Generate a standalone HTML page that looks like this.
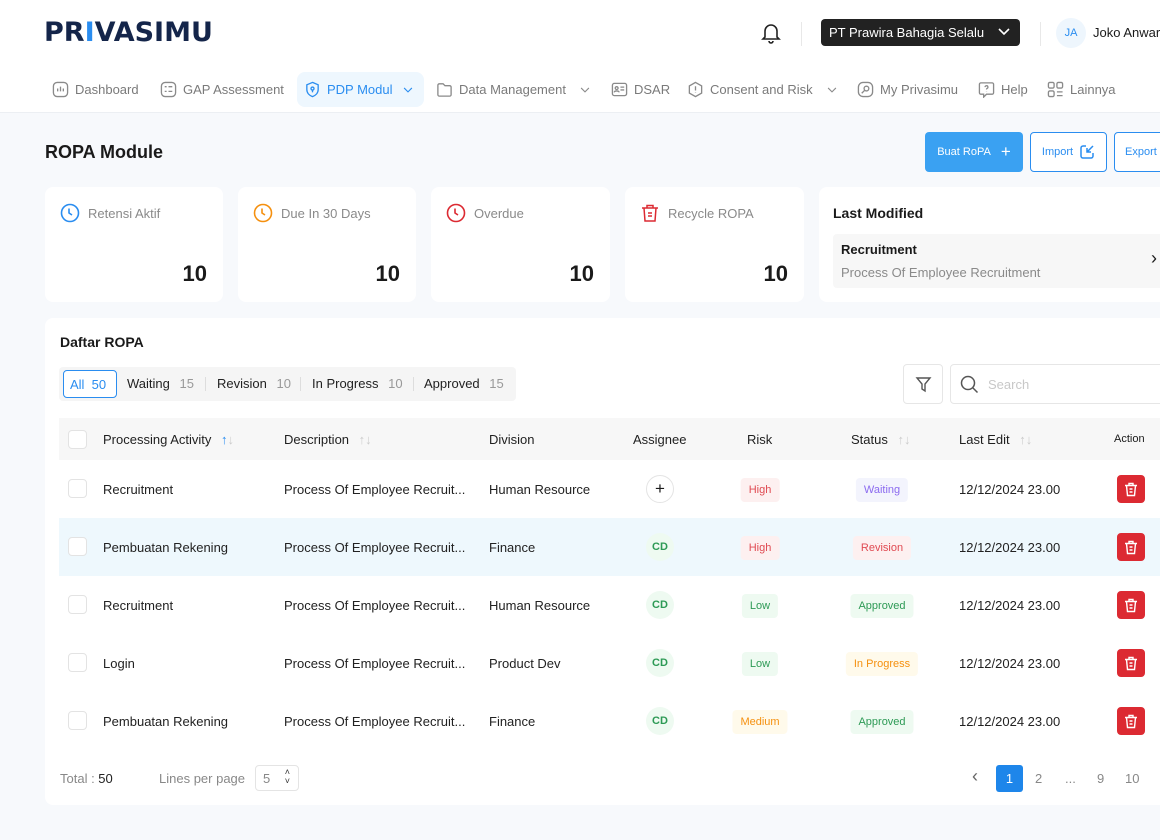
<!DOCTYPE html>
<html><head><meta charset="utf-8"><style>
*{box-sizing:border-box;margin:0;padding:0}
body{width:1160px;height:840px;overflow:hidden;background:#f7f9fc;font-family:"Liberation Sans",sans-serif;color:#1a1a1a;position:relative}
.a{position:absolute}
.hdr{left:0;top:0;width:1160px;height:113px;background:#fff;border-bottom:1px solid #eceff3}
.ni{position:absolute;top:72px;display:flex;align-items:center;gap:6px;height:35px;font-size:13px;color:#7a7a7a;white-space:nowrap}
.ni svg{width:17px;height:17px;stroke:#8a8a8a;fill:none;stroke-width:1.4}
.card{background:#fff;border-radius:8px}
.st{font-size:13px;color:#8a8a8a;display:flex;align-items:center;gap:8px}
.num{font-size:22px;font-weight:bold;right:16px;top:74px}
.th{font-size:13px;color:#1f1f1f}
.row{left:59px;width:1101px;height:58px}
.cb{width:19px;height:19px;border:1px solid #e3e3e3;border-radius:4px;background:#fff}
.t{font-size:13px;color:#222;white-space:nowrap}
.tag{font-size:11px;padding:6px 8px;border-radius:4px;transform:translateX(-50%);white-space:nowrap}
.cd{width:28px;height:28px;border-radius:50%;background:#eefaf1;color:#2d9a55;font-size:11px;font-weight:bold;display:flex;align-items:center;justify-content:center}
.del{width:28px;height:28px;border-radius:4px;background:#dc2a32;display:flex;align-items:center;justify-content:center}
</style></head><body>
<div class="a hdr"></div>
<div class="a" style="left:44px;top:17px;font-size:27px;font-weight:900;color:#14254a;letter-spacing:0px;font-family:'DejaVu Sans',sans-serif;white-space:nowrap">PR<span style="color:#2a8df0">I</span>VASIMU</div>
<svg class="a" style="left:761px;top:22px" width="20" height="22" viewBox="0 0 20 22" fill="none" stroke="#222" stroke-width="1.6"><path d="M4 15V9a6 6 0 0 1 12 0v6l2 2H2z"/><path d="M8 19a2 2 0 0 0 4 0"/></svg>
<div class="a" style="left:801px;top:22px;width:1px;height:24px;background:#e8e8e8"></div>
<div class="a" style="left:821px;top:19px;width:199px;height:27px;background:#222;border-radius:4px;color:#fff;font-size:13px;padding:6px 8px;white-space:nowrap">PT Prawira Bahagia Selalu<svg style="position:absolute;right:10px;top:9px" width="12" height="8" viewBox="0 0 12 8" fill="none" stroke="#fff" stroke-width="1.6"><path d="M1 1l5 5 5-5"/></svg></div>
<div class="a" style="left:1040px;top:22px;width:1px;height:24px;background:#e8e8e8"></div>
<div class="a" style="left:1056px;top:18px;width:30px;height:30px;border-radius:50%;background:#eef6fd;color:#2a8df0;font-size:11px;display:flex;align-items:center;justify-content:center">JA</div>
<div class="a" style="left:1093px;top:25px;font-size:13px;white-space:nowrap">Joko Anwar</div>

<div class="ni" style="left:52px"><svg viewBox="0 0 18 18"><rect x="1.5" y="1.5" width="15" height="15" rx="4"/><path d="M6 8v3M9 6v5M12 8v3"/></svg>Dashboard</div>
<div class="ni" style="left:160px"><svg viewBox="0 0 18 18"><rect x="1.5" y="1.5" width="15" height="15" rx="4"/><path d="M5 6h2M9 6h4M5 11h2M9 11h4"/></svg>GAP Assessment</div>
<div class="ni" style="left:297px;width:127px;background:#eef7fe;color:#2a8df0;border-radius:8px;padding-left:7px"><svg viewBox="0 0 18 18" style="stroke:#2a8df0"><path d="M9 1.5l6 2.5v5c0 4-3 6.5-6 7.5-3-1-6-3.5-6-7.5V4z"/><circle cx="9" cy="8" r="1.6"/><path d="M9 9.6V12"/></svg>PDP Modul<svg viewBox="0 0 18 18" style="stroke:#2a8df0;width:14px;margin-left:2px"><path d="M4 7l5 5 5-5"/></svg></div>
<div class="ni" style="left:436px"><svg viewBox="0 0 18 18"><path d="M2 4.5a1.5 1.5 0 0 1 1.5-1.5h4l2 2h5a1.5 1.5 0 0 1 1.5 1.5v8a1.5 1.5 0 0 1-1.5 1.5h-11A1.5 1.5 0 0 1 2 14.5z"/></svg>Data Management<svg viewBox="0 0 18 18" style="width:14px;margin-left:6px"><path d="M4 7l5 5 5-5"/></svg></div>
<div class="ni" style="left:611px"><svg viewBox="0 0 18 18"><rect x="1.5" y="2.5" width="15" height="13" rx="2"/><circle cx="6" cy="7.5" r="1.5"/><path d="M3.5 12c0-2 5-2 5 0M10 6.5h4M10 9.5h4"/></svg>DSAR</div>
<div class="ni" style="left:687px"><svg viewBox="0 0 18 18"><path d="M9 1.5l6.5 3.7v7.6L9 16.5l-6.5-3.7V5.2z"/><path d="M9 5.5v4.5M9 12v.5"/></svg>Consent and Risk<svg viewBox="0 0 18 18" style="width:14px;margin-left:6px"><path d="M4 7l5 5 5-5"/></svg></div>
<div class="ni" style="left:857px"><svg viewBox="0 0 18 18"><rect x="1.5" y="1.5" width="15" height="15" rx="5"/><circle cx="10" cy="8" r="2.5"/><path d="M8 10l-3 3"/></svg>My Privasimu</div>
<div class="ni" style="left:978px"><svg viewBox="0 0 18 18"><path d="M3 2h12a1.5 1.5 0 0 1 1.5 1.5v9A1.5 1.5 0 0 1 15 14H9l-3 3v-3H3a1.5 1.5 0 0 1-1.5-1.5v-9A1.5 1.5 0 0 1 3 2z"/><path d="M7.5 6.5a1.5 1.5 0 1 1 2 1.4c-.5.2-.5.6-.5 1.1M9 11v.3"/></svg>Help</div>
<div class="ni" style="left:1047px"><svg viewBox="0 0 18 18"><rect x="1.5" y="1.5" width="6" height="6" rx="1.5"/><rect x="10.5" y="1.5" width="6" height="6" rx="1.5"/><rect x="1.5" y="10.5" width="6" height="6" rx="1.5"/><path d="M10.5 11.5h6M10.5 15.5h6"/></svg>Lainnya</div>

<div class="a" style="left:45px;top:142px;font-size:18px;font-weight:bold">ROPA Module</div>
<div class="a" style="left:925px;top:132px;width:98px;height:40px;background:#3aa1f2;border-radius:4px;color:#fff;font-size:11px;display:flex;align-items:center;justify-content:center;gap:10px">Buat RoPA <span style="font-size:17px">+</span></div>
<div class="a" style="left:1030px;top:132px;width:77px;height:40px;border:1px solid #2a8df0;border-radius:4px;color:#2a8df0;font-size:11px;display:flex;align-items:center;justify-content:center;gap:6px;background:#fff">Import <svg width="16" height="16" viewBox="0 0 16 16" fill="none" stroke="#2a8df0" stroke-width="1.5"><path d="M7 2H4a2 2 0 0 0-2 2v8a2 2 0 0 0 2 2h8a2 2 0 0 0 2-2V9M14 2L8 8M8 4v4h4"/></svg></div>
<div class="a" style="left:1114px;top:132px;width:60px;height:40px;border:1px solid #2a8df0;border-radius:4px;color:#2a8df0;font-size:11px;padding:13px 10px;background:#fff">Export</div>

<div class="a card" style="left:45px;top:187px;width:178px;height:115px"><div class="a st" style="left:15px;top:16px"><svg width="20" height="20" viewBox="0 0 20 20" fill="none" stroke="#2a8df0" stroke-width="1.6"><circle cx="10" cy="10" r="8.5"/><path d="M9 5.5V10l3 2"/></svg>Retensi Aktif</div><div class="a num">10</div></div>
<div class="a card" style="left:238px;top:187px;width:178px;height:115px"><div class="a st" style="left:15px;top:16px"><svg width="20" height="20" viewBox="0 0 20 20" fill="none" stroke="#f5900f" stroke-width="1.6"><circle cx="10" cy="10" r="8.5"/><path d="M9 5.5V10l3 2"/></svg>Due In 30 Days</div><div class="a num">10</div></div>
<div class="a card" style="left:431px;top:187px;width:179px;height:115px"><div class="a st" style="left:15px;top:16px"><svg width="20" height="20" viewBox="0 0 20 20" fill="none" stroke="#dc2a32" stroke-width="1.6"><circle cx="10" cy="10" r="8.5"/><path d="M9 5.5V10l3 2"/></svg>Overdue</div><div class="a num">10</div></div>
<div class="a card" style="left:625px;top:187px;width:179px;height:115px"><div class="a st" style="left:15px;top:16px"><svg width="20" height="20" viewBox="0 0 20 20" fill="none" stroke="#dc2a32" stroke-width="1.5"><path d="M2 5h16M7 5V2.5h6V5M4 5l1 13h10l1-13M8 10h4M8 13h4"/></svg>Recycle ROPA</div><div class="a num">10</div></div>
<div class="a card" style="left:819px;top:187px;width:360px;height:115px"><div class="a" style="left:14px;top:18px;font-size:14px;font-weight:bold">Last Modified</div>
<div class="a" style="left:14px;top:47px;width:340px;height:54px;background:#f7f7f7;border-radius:4px"><div class="a" style="left:8px;top:8px;font-size:13px;font-weight:bold">Recruitment</div><div class="a" style="left:8px;top:31px;font-size:13px;color:#8a8a8a;white-space:nowrap">Process Of Employee Recruitment</div><div class="a" style="left:318px;top:14px;font-size:18px">›</div></div></div>

<div class="a card" style="left:45px;top:318px;width:1130px;height:487px"></div>
<div class="a" style="left:60px;top:334px;font-size:14px;font-weight:bold">Daftar ROPA</div>
<div class="a" style="left:59px;top:367px;width:457px;height:34px;background:#f5f5f5;border-radius:4px"></div>
<div class="a" style="left:63px;top:370px;width:54px;height:28px;border:1px solid #2a8df0;border-radius:4px;background:#fff;color:#2a8df0;font-size:13px;padding:6px 6px">All&nbsp; 50</div>
<div class="a t" style="left:127px;top:376px">Waiting <span style="color:#999;margin-left:6px">15</span></div>
<div class="a" style="left:205px;top:377px;width:1px;height:14px;background:#ddd"></div>
<div class="a t" style="left:217px;top:376px">Revision <span style="color:#999;margin-left:6px">10</span></div>
<div class="a" style="left:300px;top:377px;width:1px;height:14px;background:#ddd"></div>
<div class="a t" style="left:312px;top:376px">In Progress <span style="color:#999;margin-left:6px">10</span></div>
<div class="a" style="left:413px;top:377px;width:1px;height:14px;background:#ddd"></div>
<div class="a t" style="left:424px;top:376px">Approved <span style="color:#999;margin-left:6px">15</span></div>
<div class="a" style="left:903px;top:364px;width:40px;height:40px;border:1px solid #e6e6e6;border-radius:4px;background:#fff"><svg style="margin:11px" width="17" height="17" viewBox="0 0 17 17" fill="none" stroke="#555" stroke-width="1.4"><path d="M2 2h13l-5 6v7l-3-2V8z"/></svg></div>
<div class="a" style="left:950px;top:364px;width:220px;height:40px;border:1px solid #e6e6e6;border-radius:4px;background:#fff"><svg style="position:absolute;left:9px;top:10px" width="19" height="19" viewBox="0 0 19 19" fill="none" stroke="#555" stroke-width="1.5"><circle cx="8" cy="8" r="6.5"/><path d="M13 13l4.5 4.5"/></svg><span style="position:absolute;left:37px;top:12px;font-size:13px;color:#c8c8c8">Search</span></div>

<div class="a" style="left:59px;top:418px;width:1101px;height:42px;background:#f7f7f7"></div>
<div class="a cb" style="left:68px;top:430px"></div>
<div class="a th" style="left:103px;top:432px">Processing Activity <span style="color:#2a8df0;margin-left:6px">↑</span><span style="color:#ccc">↓</span></div>
<div class="a th" style="left:284px;top:432px">Description <span style="color:#ccc;margin-left:6px">↑↓</span></div>
<div class="a th" style="left:489px;top:432px">Division</div>
<div class="a th" style="left:633px;top:432px">Assignee</div>
<div class="a th" style="left:747px;top:432px">Risk</div>
<div class="a th" style="left:851px;top:432px">Status <span style="color:#ccc;margin-left:6px">↑↓</span></div>
<div class="a th" style="left:959px;top:432px">Last Edit <span style="color:#ccc;margin-left:6px">↑↓</span></div>
<div class="a" style="left:1114px;top:433px;font-size:11px">Action</div>

<div class="a row" style="top:518px;background:#eef8fd"></div>

<div class="a cb" style="left:68px;top:479px"></div><div class="a t" style="left:103px;top:482px">Recruitment</div><div class="a t" style="left:284px;top:482px">Process Of Employee Recruit...</div><div class="a t" style="left:489px;top:482px">Human Resource</div>
<div class="a" style="left:646px;top:475px;width:28px;height:28px;border-radius:50%;border:1px solid #e4e4e4;text-align:center;line-height:26px;font-size:17px;background:#fff">+</div>
<div class="a tag" style="left:760px;top:478px;background:#fdf0f0;color:#e04a52">High</div>
<div class="a tag" style="left:882px;top:478px;background:#f3f4fd;color:#8b6af0">Waiting</div>
<div class="a t" style="left:959px;top:482px">12/12/2024 23.00</div>
<div class="a del" style="left:1117px;top:475px"><svg width="14" height="15" viewBox="0 0 14 15" fill="none" stroke="#fff" stroke-width="1.4"><path d="M1 3.5h12M5 3.5V1.5h4v2M2.5 3.5l1 10h7l1-10M5.5 7h3M5.5 10h3"/></svg></div>

<div class="a cb" style="left:68px;top:537px"></div><div class="a t" style="left:103px;top:540px">Pembuatan Rekening</div><div class="a t" style="left:284px;top:540px">Process Of Employee Recruit...</div><div class="a t" style="left:489px;top:540px">Finance</div>
<div class="a cd" style="left:646px;top:533px">CD</div>
<div class="a tag" style="left:760px;top:536px;background:#fdf0f0;color:#e04a52">High</div>
<div class="a tag" style="left:882px;top:536px;background:#fdf0f0;color:#e04a52">Revision</div>
<div class="a t" style="left:959px;top:540px">12/12/2024 23.00</div>
<div class="a del" style="left:1117px;top:533px"><svg width="14" height="15" viewBox="0 0 14 15" fill="none" stroke="#fff" stroke-width="1.4"><path d="M1 3.5h12M5 3.5V1.5h4v2M2.5 3.5l1 10h7l1-10M5.5 7h3M5.5 10h3"/></svg></div>

<div class="a cb" style="left:68px;top:595px"></div><div class="a t" style="left:103px;top:598px">Recruitment</div><div class="a t" style="left:284px;top:598px">Process Of Employee Recruit...</div><div class="a t" style="left:489px;top:598px">Human Resource</div>
<div class="a cd" style="left:646px;top:591px">CD</div>
<div class="a tag" style="left:760px;top:594px;background:#eefaf1;color:#2d9a55">Low</div>
<div class="a tag" style="left:882px;top:594px;background:#eefaf1;color:#2d9a55">Approved</div>
<div class="a t" style="left:959px;top:598px">12/12/2024 23.00</div>
<div class="a del" style="left:1117px;top:591px"><svg width="14" height="15" viewBox="0 0 14 15" fill="none" stroke="#fff" stroke-width="1.4"><path d="M1 3.5h12M5 3.5V1.5h4v2M2.5 3.5l1 10h7l1-10M5.5 7h3M5.5 10h3"/></svg></div>

<div class="a cb" style="left:68px;top:653px"></div><div class="a t" style="left:103px;top:656px">Login</div><div class="a t" style="left:284px;top:656px">Process Of Employee Recruit...</div><div class="a t" style="left:489px;top:656px">Product Dev</div>
<div class="a cd" style="left:646px;top:649px">CD</div>
<div class="a tag" style="left:760px;top:652px;background:#eefaf1;color:#2d9a55">Low</div>
<div class="a tag" style="left:882px;top:652px;background:#fffaeb;color:#f5900f">In Progress</div>
<div class="a t" style="left:959px;top:656px">12/12/2024 23.00</div>
<div class="a del" style="left:1117px;top:649px"><svg width="14" height="15" viewBox="0 0 14 15" fill="none" stroke="#fff" stroke-width="1.4"><path d="M1 3.5h12M5 3.5V1.5h4v2M2.5 3.5l1 10h7l1-10M5.5 7h3M5.5 10h3"/></svg></div>

<div class="a cb" style="left:68px;top:711px"></div><div class="a t" style="left:103px;top:714px">Pembuatan Rekening</div><div class="a t" style="left:284px;top:714px">Process Of Employee Recruit...</div><div class="a t" style="left:489px;top:714px">Finance</div>
<div class="a cd" style="left:646px;top:707px">CD</div>
<div class="a tag" style="left:760px;top:710px;background:#fffaeb;color:#f5900f">Medium</div>
<div class="a tag" style="left:882px;top:710px;background:#eefaf1;color:#2d9a55">Approved</div>
<div class="a t" style="left:959px;top:714px">12/12/2024 23.00</div>
<div class="a del" style="left:1117px;top:707px"><svg width="14" height="15" viewBox="0 0 14 15" fill="none" stroke="#fff" stroke-width="1.4"><path d="M1 3.5h12M5 3.5V1.5h4v2M2.5 3.5l1 10h7l1-10M5.5 7h3M5.5 10h3"/></svg></div>

<div class="a" style="left:60px;top:771px;font-size:13px;color:#888">Total : <b style="color:#222;font-weight:normal">50</b></div>
<div class="a" style="left:159px;top:771px;font-size:13px;color:#888">Lines per page</div>
<div class="a" style="left:255px;top:765px;width:44px;height:26px;border:1px solid #e4e4e4;border-radius:4px;font-size:13px;color:#888;padding:5px 7px">5<span style="position:absolute;right:8px;top:2px;font-size:9px;line-height:9px;color:#333">˄<br>˅</span></div>
<div class="a" style="left:972px;top:766px;font-size:18px;color:#666">‹</div>
<div class="a" style="left:996px;top:765px;width:27px;height:27px;background:#1e86ea;border-radius:3px;color:#fff;font-size:13px;text-align:center;line-height:27px">1</div>
<div class="a" style="left:1035px;top:771px;font-size:13px;color:#888">2</div>
<div class="a" style="left:1065px;top:771px;font-size:13px;color:#888">...</div>
<div class="a" style="left:1097px;top:771px;font-size:13px;color:#888">9</div>
<div class="a" style="left:1125px;top:771px;font-size:13px;color:#888">10</div>
</body></html>
